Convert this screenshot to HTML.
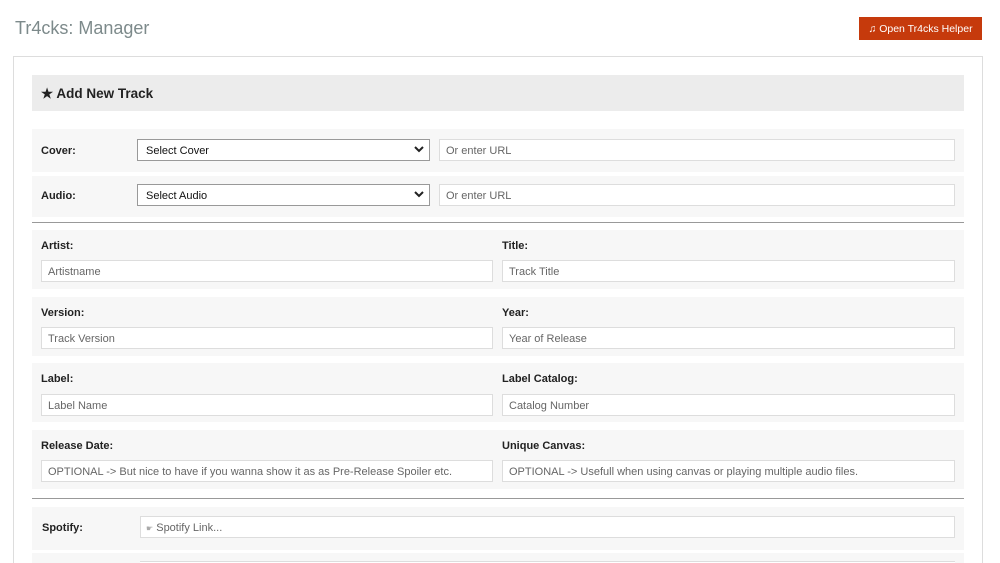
<!DOCTYPE html>
<html style="width:1000px;height:563px;overflow:hidden"><head><style>
*{box-sizing:border-box;margin:0;padding:0}
body{width:1000px;height:563px;overflow:hidden;background:#fff;font-family:"Liberation Sans",Arial,sans-serif;position:relative}
.a{position:absolute}
.t{left:15px;top:18px;font-size:18px;color:#7d8a8b}
.btn{left:859px;top:17px;width:123px;height:23px;background:#c63a0c;color:#fff;font-size:10.5px;line-height:24px;text-align:center}
.box{left:13px;top:56px;width:970px;height:507px;border:1px solid #ddd;border-bottom:none}
.hd{left:32px;top:75px;width:932px;height:36px;background:#ececec;font-weight:bold;font-size:13.5px;color:#222;line-height:38px;padding-left:9px}
.row{left:32px;width:932px;background:#f7f7f7}
.lb{font-size:11px;font-weight:bold;color:#222}
.in{height:22px;border:1px solid #ddd;background:#fff;font-size:11px;color:#666;line-height:22px;padding-left:6px}
.sel{height:22px;border:1px solid #999;background:#fff;font-size:11px;color:#111;line-height:22px;padding-left:8px}
.sel svg{position:absolute;right:5px;top:6px}
.sep{left:32px;width:932px;height:1px;background:#999}
</style></head><body>
<div class="a t">Tr4cks: Manager</div>
<div class="a btn">♫ Open Tr4cks Helper</div>
<div class="a box"></div>
<div class="a hd">★ Add New Track</div>

<div class="a row" style="top:129px;height:43px"></div>
<div class="a lb" style="left:41px;top:145px">Cover:</div>
<div class="a sel" style="left:137px;top:139px;width:293px">Select Cover<svg width="10" height="8"><path d="M1 1l4 4 4-4" stroke="#222" stroke-width="2" fill="none"/></svg></div>
<div class="a in" style="left:439px;top:139px;width:516px">Or enter URL</div>

<div class="a row" style="top:176px;height:41px"></div>
<div class="a lb" style="left:41px;top:190px">Audio:</div>
<div class="a sel" style="left:137px;top:184px;width:293px">Select Audio<svg width="10" height="8"><path d="M1 1l4 4 4-4" stroke="#222" stroke-width="2" fill="none"/></svg></div>
<div class="a in" style="left:439px;top:184px;width:516px">Or enter URL</div>

<div class="a sep" style="top:222px"></div>

<div class="a row" style="top:230px;height:59px"></div>
<div class="a lb" style="left:41px;top:240px">Artist:</div>
<div class="a lb" style="left:502px;top:240px">Title:</div>
<div class="a in" style="left:41px;top:260px;width:452px">Artistname</div>
<div class="a in" style="left:502px;top:260px;width:453px">Track Title</div>

<div class="a row" style="top:297px;height:59px"></div>
<div class="a lb" style="left:41px;top:307px">Version:</div>
<div class="a lb" style="left:502px;top:307px">Year:</div>
<div class="a in" style="left:41px;top:327px;width:452px">Track Version</div>
<div class="a in" style="left:502px;top:327px;width:453px">Year of Release</div>

<div class="a row" style="top:363px;height:59px"></div>
<div class="a lb" style="left:41px;top:373px">Label:</div>
<div class="a lb" style="left:502px;top:373px">Label Catalog:</div>
<div class="a in" style="left:41px;top:394px;width:452px">Label Name</div>
<div class="a in" style="left:502px;top:394px;width:453px">Catalog Number</div>

<div class="a row" style="top:430px;height:59px"></div>
<div class="a lb" style="left:41px;top:440px">Release Date:</div>
<div class="a lb" style="left:502px;top:440px">Unique Canvas:</div>
<div class="a in" style="left:41px;top:460px;width:452px">OPTIONAL -&gt; But nice to have if you wanna show it as as Pre-Release Spoiler etc.</div>
<div class="a in" style="left:502px;top:460px;width:453px">OPTIONAL -&gt; Usefull when using canvas or playing multiple audio files.</div>

<div class="a sep" style="top:498px"></div>

<div class="a row" style="top:507px;height:43px"></div>
<div class="a lb" style="left:42px;top:522px">Spotify:</div>
<div class="a in" style="left:140px;top:516px;width:815px;padding-left:5px"><span style="font-size:8px;color:#aaa">☛</span> Spotify Link...</div>

<div class="a row" style="top:553px;height:10px"></div>
<div class="a" style="left:140px;top:561px;width:815px;height:2px;border-top:1px solid #ddd;background:#fff"></div>
</body></html>
